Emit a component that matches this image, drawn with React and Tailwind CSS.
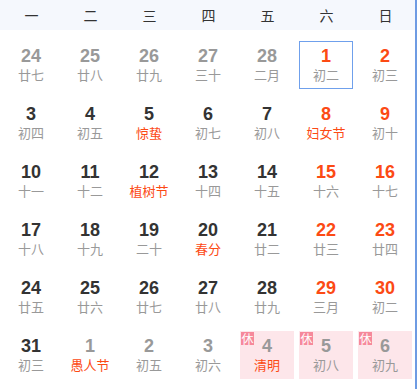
import React from 'react';

const weekdays = ['一', '二', '三', '四', '五', '六', '日'];

// kind: 'other' = prev/next month, 'cur' = this month
// fest = festival/term (red lunar), rest = holiday badge, sel = selected
const days = [
    { n: 24, l: '廿七', kind: 'other' },
    { n: 25, l: '廿八', kind: 'other' },
    { n: 26, l: '廿九', kind: 'other' },
    { n: 27, l: '三十', kind: 'other' },
    { n: 28, l: '二月', kind: 'other' },
    { n: 1, l: '初二', kind: 'cur', sel: true },
    { n: 2, l: '初三', kind: 'cur' },

    { n: 3, l: '初四', kind: 'cur' },
    { n: 4, l: '初五', kind: 'cur' },
    { n: 5, l: '惊蛰', kind: 'cur', fest: true },
    { n: 6, l: '初七', kind: 'cur' },
    { n: 7, l: '初八', kind: 'cur' },
    { n: 8, l: '妇女节', kind: 'cur', fest: true },
    { n: 9, l: '初十', kind: 'cur' },

    { n: 10, l: '十一', kind: 'cur' },
    { n: 11, l: '十二', kind: 'cur' },
    { n: 12, l: '植树节', kind: 'cur', fest: true },
    { n: 13, l: '十四', kind: 'cur' },
    { n: 14, l: '十五', kind: 'cur' },
    { n: 15, l: '十六', kind: 'cur' },
    { n: 16, l: '十七', kind: 'cur' },

    { n: 17, l: '十八', kind: 'cur' },
    { n: 18, l: '十九', kind: 'cur' },
    { n: 19, l: '二十', kind: 'cur' },
    { n: 20, l: '春分', kind: 'cur', fest: true },
    { n: 21, l: '廿二', kind: 'cur' },
    { n: 22, l: '廿三', kind: 'cur' },
    { n: 23, l: '廿四', kind: 'cur' },

    { n: 24, l: '廿五', kind: 'cur' },
    { n: 25, l: '廿六', kind: 'cur' },
    { n: 26, l: '廿七', kind: 'cur' },
    { n: 27, l: '廿八', kind: 'cur' },
    { n: 28, l: '廿九', kind: 'cur' },
    { n: 29, l: '三月', kind: 'cur' },
    { n: 30, l: '初二', kind: 'cur' },

    { n: 31, l: '初三', kind: 'cur' },
    { n: 1, l: '愚人节', kind: 'other', fest: true },
    { n: 2, l: '初五', kind: 'other' },
    { n: 3, l: '初六', kind: 'other' },
    { n: 4, l: '清明', kind: 'other', fest: true, rest: true },
    { n: 5, l: '初八', kind: 'other', rest: true },
    { n: 6, l: '初九', kind: 'other', rest: true },
];

const DayCell = ({ d, col }) => {
    const weekend = col >= 5;
    let numColor = 'text-[#333333]';
    if (d.kind === 'other') numColor = 'text-[#999999]';
    else if (weekend) numColor = 'text-[#fc4a14]';
    const lunarColor = d.fest ? 'text-[#fc4a14]' : 'text-[#999999]';

    let box = 'border border-transparent';
    if (d.sel) box = 'border border-[#6fa0ec]';
    if (d.rest) box = 'border border-transparent bg-[#fde6ea]';

    return (
        <div className="h-[58px] pt-[5px] pl-[2px]">
            <div className={`relative w-[54px] h-[48px] flex flex-col items-center ${box}`}>
                {d.rest && (
                    <span className="absolute left-0 top-0 w-[13px] h-[13px] bg-[#f6899b] text-white text-[12px] leading-[13px] text-center">
                        休
                    </span>
                )}
                <div className={`mt-[4px] text-[18px] leading-[20px] font-bold font-['Liberation_Sans',Arial,sans-serif] ${numColor}`}>
                    {d.n}
                </div>
                <div className={`text-[13px] leading-[18px] whitespace-nowrap ${lunarColor}`}>
                    {d.l}
                </div>
            </div>
        </div>
    );
};

const App = () => {
    return (
        <div className="w-[418px] h-[389px] bg-white flex font-['Noto_Sans_CJK_SC','Liberation_Sans',sans-serif] overflow-hidden">
            <div className="w-[415px] flex flex-col">
                <div className="h-[30px] bg-[#f5f8fd] pl-[2px] grid grid-cols-[repeat(7,59px)] items-center">
                    {weekdays.map(w => (
                        <div key={w} className="text-center text-[14px] text-[#333333]">{w}</div>
                    ))}
                </div>
                <div className="pt-[6px] pl-[2px] grid grid-cols-[repeat(7,59px)]">
                    {days.map((d, i) => (
                        <DayCell key={i} d={d} col={i % 7} />
                    ))}
                </div>
            </div>
            <div className="w-[2px] h-full bg-[#6e9be3]" />
        </div>
    );
};

export default App;
